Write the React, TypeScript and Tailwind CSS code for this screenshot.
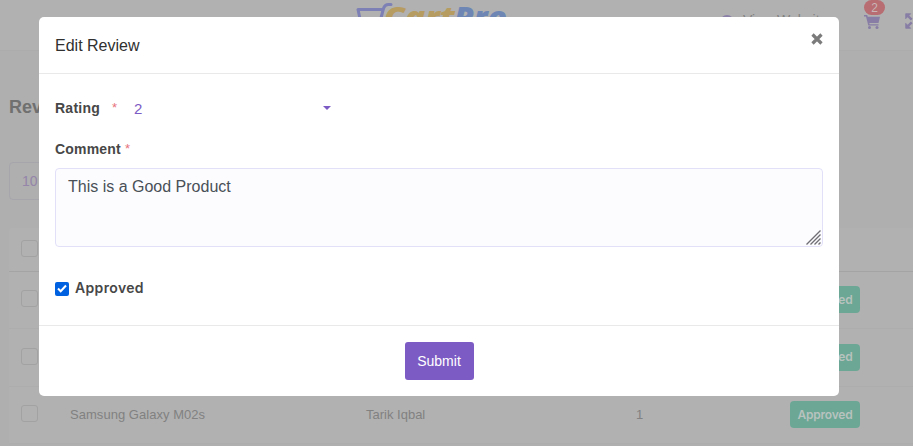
import React from "react";

const rows = [
  { product: "Samsung Galaxy M02s", customer: "Tarik Iqbal", rating: 4, h: "h-[57px]", pb: "pb-[4px]" },
  { product: "Samsung Galaxy M02s", customer: "Tarik Iqbal", rating: 2, h: "h-[58px]", pb: "pb-[3px]" },
  { product: "Samsung Galaxy M02s", customer: "Tarik Iqbal", rating: 1, h: "h-[57px]", pb: "pb-[3px]" },
];

function Box() {
  return <span className="block h-[17px] w-[17px] rounded-[3px] border border-[#a2a2a2]" />;
}

function Logo() {
  return (
    <svg width="154" height="40" viewBox="0 0 154 40" className="block">
      <path d="M36 2.500h-2.500c-3 0-4 1-5 4l-4 15M28 7.500H3l3 14h16" fill="none" stroke="#7c80b4" strokeWidth="3" strokeLinecap="round" strokeLinejoin="round" />
      <text x="29" y="25" fontFamily="'Open Sans', sans-serif" fontWeight="800" fontStyle="italic" fontSize="29" fill="#b69c60" textLength="71" lengthAdjust="spacingAndGlyphs">Cart</text>
      <text x="99" y="25" fontFamily="'Open Sans', sans-serif" fontWeight="800" fontStyle="italic" fontSize="29" fill="#6d86b4" textLength="53" lengthAdjust="spacingAndGlyphs">Pro</text>
    </svg>
  );
}

function Header() {
  return (
    <header className="flex h-[51px] items-start border-b border-[#acacac] bg-[#b1b1b1]">
      <div className="ml-[355px] mt-[2px] w-[154px]"><Logo /></div>
      <div className="ml-[211px] mt-[11px] flex h-[18px] items-center gap-[9px] text-[14px] leading-[18px] text-[#818181]">
        <svg width="14" height="14" viewBox="0 0 14 14" className="mt-[3px]" fill="none" stroke="#8a80a8" strokeWidth="2.500">
          <circle cx="7" cy="7" r="5.700" /><path d="M1.500 7h11M7 1.500v11" strokeWidth="1" />
        </svg>
        <span className="w-[82px] whitespace-nowrap">View Website</span>
      </div>
      <div className="ml-[39px] flex w-[22px] flex-col items-center">
        <span className="flex h-[15px] w-[21px] items-center justify-center rounded-full bg-[#b76d72] text-[12px] leading-none text-[#c9b5b6]">2</span>
        <svg width="16" height="14" viewBox="0 0 16 14" className="-ml-[5px]" fill="#877da5">
          <path d="M0 0h3.200l.5 1.700H16L14.500 8H5.300l.3 1.200H14.500v1.400H4.300L2 1.600H0z" />
          <circle cx="5.500" cy="12.400" r="1.500" /><circle cx="13" cy="12.400" r="1.500" />
        </svg>
      </div>
      <svg width="16" height="16" viewBox="0 0 16 16" className="ml-[20px] mt-[13px] shrink-0" fill="#877da5" stroke="#877da5">
        <path d="M.7.7h5L.7 5.700zM15.300.7h-5l5 5zM.7 15.300h5l-5-5zM15.300 15.300h-5l5-5z" strokeWidth=".8" />
        <path d="M2 2l4.700 4.700M14 2L9.300 6.700M2 14l4.700-4.700M14 14L9.300 9.300" strokeWidth="2.400" />
      </svg>
    </header>
  );
}

function Background() {
  return (
    <div className="h-full bg-[#afafaf]">
      <Header />
      <h1 className="ml-[9px] mt-[45px] text-[18px] font-bold leading-[22px] text-[#707070]">Reviews</h1>
      <div className="ml-[9px] mt-[44px] flex h-[38px] w-[100px] items-center rounded-[4px] border border-[#a6a5ac] pl-[12px] text-[14px] text-[#9485a9]">10</div>
      <section className="ml-[9px] mt-[28px] h-[216px] overflow-hidden rounded-tl-[3px] bg-[#b1b1b1] text-[13px] text-[#818181]">
        <div className="flex h-[44px] items-center border-b border-[#a4a4a4] pb-[2px] pl-[12px]"><Box /></div>
        {rows.map((row, i) => (
          <div key={i} className={`${row.h} flex items-center border-b border-[#adadad] pl-[12px]`}>
            <span className={row.pb}><Box /></span>
            <span className="ml-[32px] w-[296px] whitespace-nowrap tracking-[0.04px]">{row.product}</span>
            <span className="w-[270px]">{row.customer}</span>
            <span className="w-[154px]">{row.rating}</span>
            <span className="mb-px flex h-[27px] w-[70px] items-center justify-center rounded-[4px] bg-[#6ca795] font-['Inter',sans-serif] text-[12px] font-semibold tracking-[-0.2px] text-[#b7c2be]">Approved</span>
          </div>
        ))}
      </section>
    </div>
  );
}

function Modal() {
  return (
    <div role="dialog" className="absolute left-[39px] top-[17px] flex h-[379px] w-[800px] flex-col rounded-[5px] bg-white">
      <div className="flex h-[57px] items-center justify-between border-b border-[#e9e9e9] px-4">
        <h2 className="mt-[2px] text-[16px] leading-6 text-[#303030]">Edit Review</h2>
        <svg width="12" height="12" viewBox="0 0 12 12" className="-mt-[12px]"><path d="M1.500 1.500l9 9M10.500 1.500l-9 9" stroke="#7b7b7b" strokeWidth="3.200" /></svg>
      </div>
      <div className="flex h-[251px] flex-col px-4 text-[14px] text-[#474747]">
        <div className="mt-[22px] flex h-[24px] items-center">
          <span className="w-[57px] font-bold tracking-[0.25px]">Rating</span>
          <span className="w-[22px] text-[13px] text-[#e8737c]">*</span>
          <span className="mt-[2px] w-[189px] text-[15px] text-[#7d5bc4]">2</span>
          <span className="h-0 w-0 border-x-4 border-t-4 border-x-transparent border-t-[#7d5bc4]" />
        </div>
        <div className="mt-[17px] flex h-[24px] items-center font-bold tracking-[0.2px]">
          Comment<span className="ml-[4px] text-[13px] font-normal text-[#e8737c]">*</span>
        </div>
        <div className="mt-[7px] flex h-[79px] w-[768px] justify-between rounded-[4px] border border-[#e2e0f8] bg-[#fcfcff] pl-[12px] pt-[6px] text-[16px] leading-6 text-[#495057]">
          <span>This is a Good Product</span>
          <svg width="15" height="15" viewBox="0 0 15 15" className="mb-[1px] mr-[1px] self-end" stroke="#707074" strokeWidth="1.400"><path d="M.5 14.500l14-14M4.500 14.500l10-10M8.500 14.500l6-6M12.500 14.500l2-2" /></svg>
        </div>
        <div className="mt-[29px] flex h-[24px] items-center">
          <span className="mt-[1px] flex h-[14px] w-[14px] items-center justify-center rounded-[2px] bg-[#0061e0]">
            <svg width="10" height="9" viewBox="0 0 10 9"><path d="M1 4.500l2.700 2.700L9 1.500" stroke="white" strokeWidth="2" fill="none" /></svg>
          </span>
          <span className="mb-[2px] ml-[6px] font-['Inter',sans-serif] font-semibold tracking-[0.35px]">Approved</span>
        </div>
      </div>
      <div className="flex flex-1 items-center justify-center border-t border-[#e9e9e9]">
        <button className="h-[38px] w-[69px] rounded-[3px] bg-[#7d5bc4] text-[14px] text-white">Submit</button>
      </div>
    </div>
  );
}

export default function App() {
  return (
    <main className="relative h-[446px] w-[913px] overflow-hidden font-['Liberation_Sans',Arial,sans-serif]">
      <Background />
      <Modal />
    </main>
  );
}
